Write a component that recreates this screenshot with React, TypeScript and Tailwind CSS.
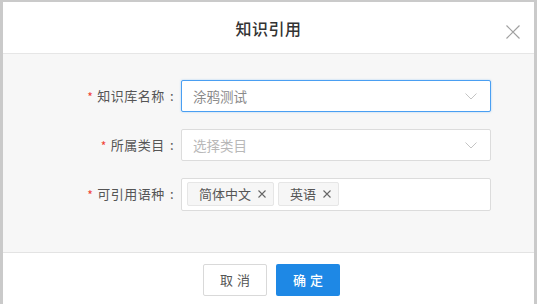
const font = { fontFamily: '"Noto Sans CJK SC", "Noto Sans", sans-serif' };

function Chevron() {
  return (
    <svg width="12" height="7" viewBox="0 0 12 7" className="text-[#c4c4c4]">
      <path d="M0.5 0.5 L6 6 L11.5 0.5" fill="none" stroke="currentColor" strokeWidth="1" />
    </svg>
  );
}

function Cross({ size, stroke, className }: { size: number; stroke: number; className: string }) {
  return (
    <svg width={size} height={size} viewBox={`0 0 ${size} ${size}`} className={className}>
      <path
        d={`M0.5 0.5 L${size - 0.5} ${size - 0.5} M${size - 0.5} 0.5 L0.5 ${size - 0.5}`}
        stroke="currentColor"
        strokeWidth={stroke}
        fill="none"
      />
    </svg>
  );
}

function Label({ text }: { text: string }) {
  return (
    <div className="w-[178px] shrink-0 flex items-center justify-end pr-[7px] text-[13px] tracking-[0.5px] text-[#555]">
      <span className="text-[#f04134] text-[12px] mr-[4px] relative top-[1px]">*</span>
      <span>{text}</span>
      <span className="ml-[5px]">:</span>
    </div>
  );
}

function Tag({ text }: { text: string }) {
  return (
    <div className="h-[24px] flex items-center gap-[7px] pl-[11px] pr-[7px] bg-[#f6f6f6] border border-[#e6e6e6] rounded-[2px] text-[13px] text-[#555]">
      <span>{text}</span>
      <Cross size={8} stroke={1.1} className="text-[#666]" />
    </div>
  );
}

export default function App() {
  const rows = [
    { label: "知识库名称", value: "涂鸦测试", placeholder: false, focus: true },
    { label: "所属类目", value: "选择类目", placeholder: true, focus: false },
  ];

  return (
    <div
      className="w-[537px] h-[304px] bg-white border-l-[3px] border-r-[3px] border-t-2 border-[#cacaca] flex flex-col overflow-hidden"
      style={font}
    >
      <div className="h-[52px] shrink-0 relative flex items-center justify-center border-b border-[#e6e6e6]">
        <span className="text-[16px] font-medium text-[#333] tracking-[0.5px]">知识引用</span>
        <Cross size={14} stroke={1.2} className="absolute right-[14px] top-[23px] text-[#a0a0a0]" />
      </div>

      <div className="h-[199px] shrink-0 bg-[#f7f7f7] border-b border-[#e3e3e3] pt-[26px] flex flex-col gap-[17px]">
        {rows.map((r) => (
          <div key={r.label} className="flex items-center h-[32px]">
            <Label text={r.label} />
            <div
              className={
                "w-[310px] h-[32px] bg-white rounded-[2px] flex items-center justify-between pl-[11px] pr-[13px] " +
                (r.focus
                  ? "border border-[#4a9ff2] shadow-[0_0_2px_rgba(74,159,242,0.5)]"
                  : "border border-[#dcdcdc]")
              }
            >
              <span className={"text-[13.5px] " + (r.placeholder ? "text-[#b8b8b8]" : "text-[#8a8a8a]")}>
                {r.value}
              </span>
              <Chevron />
            </div>
          </div>
        ))}
        <div className="flex items-center h-[32px]">
          <Label text="可引用语种" />
          <div className="w-[310px] h-[33px] bg-white border border-[#dcdcdc] rounded-[2px] flex items-center gap-[4px] pl-[5px]">
            <Tag text="简体中文" />
            <Tag text="英语" />
          </div>
        </div>
      </div>

      <div className="flex-1 flex justify-center gap-[9px] pt-[11px] pl-[6px]">
        <button className="w-[64px] h-[32px] border border-[#d9d9d9] rounded-[2px] bg-white text-[13px] text-[#555] tracking-[4px] pl-[4px]">
          取消
        </button>
        <button className="w-[64px] h-[32px] rounded-[2px] bg-[#1e88e5] text-[13px] text-white font-medium tracking-[4px] pl-[4px]">
          确定
        </button>
      </div>
    </div>
  );
}
